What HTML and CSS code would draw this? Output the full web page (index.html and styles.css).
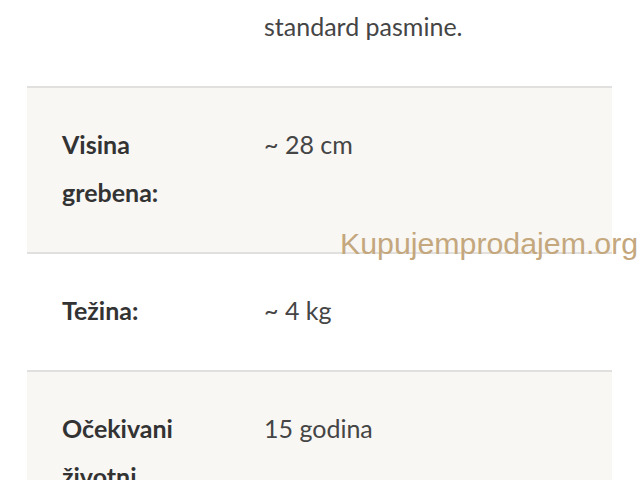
FILE: index.html
```html
<!DOCTYPE html>
<html lang="hr">
<head>
<meta charset="utf-8">
<title>Pasmina</title>
<link rel="stylesheet" href="styles.css">
</head>
<body>
<div class="specs">
  <div class="row">
    <div class="label"></div>
    <div class="value">standard pasmine.</div>
  </div>
  <div class="row alt">
    <div class="label">Visina grebena:</div>
    <div class="value">~ 28 cm</div>
  </div>
  <div class="row">
    <div class="label">Težina:</div>
    <div class="value">~ 4 kg</div>
  </div>
  <div class="row alt">
    <div class="label">Očekivani životni vijek:</div>
    <div class="value">15 godina</div>
  </div>
</div>
<div class="watermark">Kupujemprodajem.org</div>
</body>
</html>
```

FILE: styles.css
```css
html, body {
  margin: 0;
  padding: 0;
  background: #fff;
  overflow: hidden;
  height: 480px;
}
body {
  font-family: Lato, "Open Sans", sans-serif;
  position: relative;
}
.specs {
  margin: -30px 0 0 27px;
  width: 585px;
}
.row {
  display: grid;
  grid-template-columns: 130px 1fr;
  column-gap: 72px;
  padding: 32px 35px 36px;
  font-size: 25px;
  line-height: 48px;
}
.row + .row {
  border-top: 2px solid #e1e0de;
}
.row.alt {
  background: #f8f7f4;
}
.label {
  font-weight: 700;
  color: #333;
}
.value {
  color: #454545;
}
.watermark {
  position: absolute;
  left: 340px;
  top: 229px;
  font-family: "Liberation Sans", Arial, sans-serif;
  font-size: 30.3px;
  line-height: 30px;
  color: #c4a77d;
  white-space: nowrap;
}
```
